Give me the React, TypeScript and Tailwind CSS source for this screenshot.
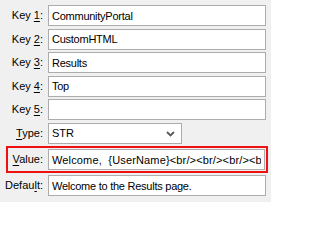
import React from "react";

type KeyRow = {
  label: string;
  hotkey: string;
  rest: string;
  value: string;
};

const keyRows: KeyRow[] = [
  { label: "Key ", hotkey: "1", rest: ":", value: "CommunityPortal" },
  { label: "Key ", hotkey: "2", rest: ":", value: "CustomHTML" },
  { label: "Key ", hotkey: "3", rest: ":", value: "Results" },
  { label: "Key ", hotkey: "4", rest: ":", value: "Top" },
  { label: "Key ", hotkey: "5", rest: ":", value: "" },
];

function Label({ before, hotkey, after }: { before: string; hotkey: string; after: string }) {
  return (
    <span className="text-right text-[11px] leading-none text-black">
      {before}
      <span className="underline underline-offset-[2px]">{hotkey}</span>
      {after}
    </span>
  );
}

function TextBox({ value, wide }: { value: string; wide?: boolean }) {
  return (
    <input
      readOnly
      value={value}
      className={
        wide
          ? "h-[21px] w-full min-w-0 border border-[#acacac] bg-white px-[3px] text-[11px] tracking-[0.15px] text-black outline-none"
          : "h-[21px] w-full min-w-0 border border-[#acacac] bg-white px-[3px] text-[11px] tracking-[-0.25px] text-black outline-none"
      }
    />
  );
}

export default function App() {
  return (
    <div
      className="flex h-[202px] w-[271px] flex-col bg-[#f0f0f0] pr-[5px] pt-[5px]"
      style={{ fontFamily: '"Liberation Sans", Arial, sans-serif' }}
    >
      <div className="flex flex-col gap-[2.5px]">
        {keyRows.map((row) => (
          <div key={row.hotkey} className="grid grid-cols-[43px_1fr] items-center gap-[5px]">
            <Label before={row.label} hotkey={row.hotkey} after={row.rest} />
            <TextBox value={row.value} />
          </div>
        ))}
      </div>

      <div className="mt-[3px] grid grid-cols-[43px_1fr] items-center gap-[5px]">
        <Label before="" hotkey="T" after="ype:" />
        <div className="flex h-[21px] w-[134px] items-center justify-between border border-[#acacac] bg-white pl-[3px] pr-[6px] text-[11px] text-black">
          <span>STR</span>
          <svg width="9" height="6" viewBox="0 0 9 6" fill="none">
            <path d="M1 1l3.5 3.5L8 1" stroke="#5a5a5a" strokeWidth="1.8" />
          </svg>
        </div>
      </div>

      <div className="ml-[6px] mr-[-2px] mt-[2px] grid grid-cols-[35px_1fr] items-center gap-[5px] border-2 border-[#ee1111] py-[1px] pr-[1px]">
        <Label before="" hotkey="V" after="alue:" />
        <TextBox wide value="Welcome,  {UserName}<br/><br/><br/><br/><br/>" />
      </div>

      <div className="mt-[2px] grid grid-cols-[43px_1fr] items-center gap-[5px]">
        <Label before="Defau" hotkey="l" after="t:" />
        <TextBox value="Welcome to the Results page." />
      </div>
    </div>
  );
}
